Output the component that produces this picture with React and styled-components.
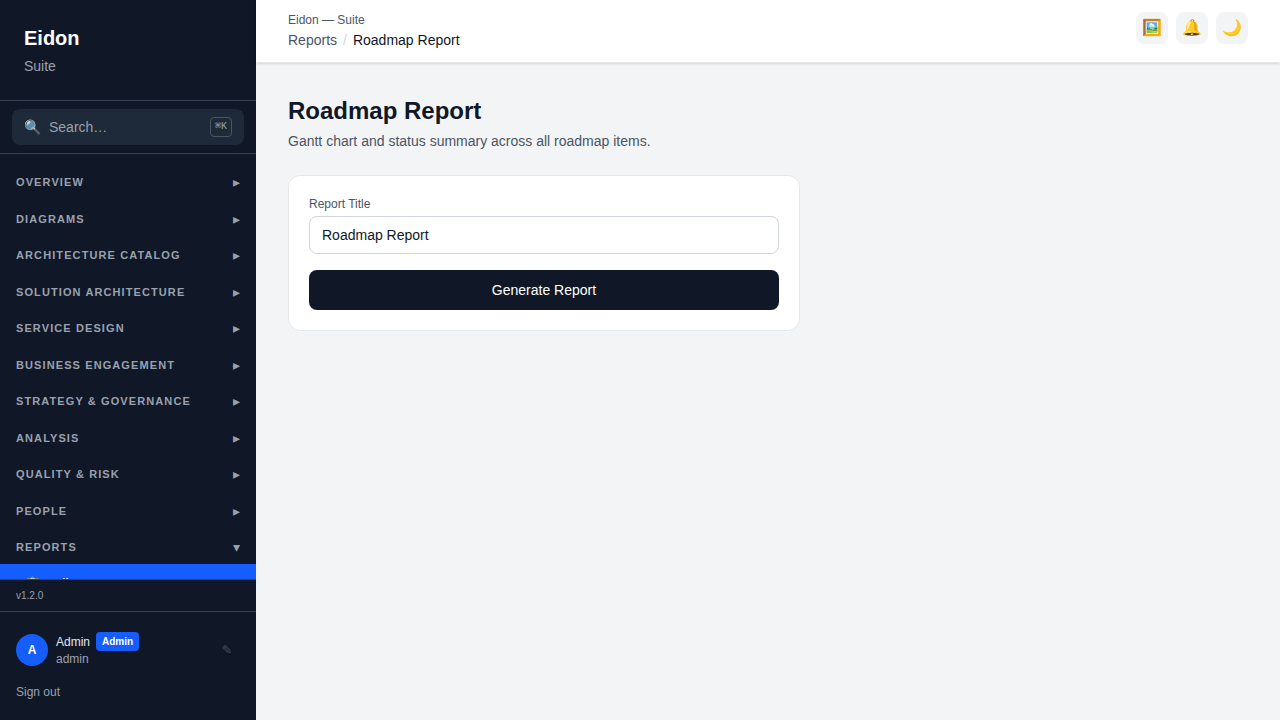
import React, { useState } from 'react';
import styled, { createGlobalStyle } from 'styled-components';

const sections = [
  { name: 'Overview' },
  { name: 'Diagrams' },
  { name: 'Architecture Catalog' },
  { name: 'Solution Architecture' },
  { name: 'Service Design' },
  { name: 'Business Engagement' },
  { name: 'Strategy & Governance' },
  { name: 'Analysis' },
  { name: 'Quality & Risk' },
  { name: 'People' },
  { name: 'Reports', links: [{ icon: '📋', label: 'All Reports' }] },
];

const actions = [
  { icon: '🖼️', label: 'Gallery' },
  { icon: '🔔', label: 'Notifications' },
  { icon: '🌙', label: 'Dark mode' },
];

function Sidebar() {
  const [open, setOpen] = useState('Reports');

  return (
    <Aside>
      <Brand>
        <BrandName>Eidon</BrandName>
        <BrandSub>Suite</BrandSub>
      </Brand>
      <SearchArea>
        <SearchButton type="button">
          <span>🔍</span>
          <SearchText>Search…</SearchText>
          <Kbd>⌘K</Kbd>
        </SearchButton>
      </SearchArea>
      <Nav>
        {sections.map((section) => (
          <div key={section.name}>
            <SectionButton
              type="button"
              aria-expanded={open === section.name}
              onClick={() => setOpen(open === section.name ? '' : section.name)}
            >
              <span>{section.name}</span>
              <Arrow>{open === section.name ? '▾' : '▸'}</Arrow>
            </SectionButton>
            {open === section.name && section.links?.map((link) => (
              <NavItem key={link.label} href="#reports">
                <span>{link.icon}</span>
                <span>{link.label}</span>
              </NavItem>
            ))}
          </div>
        ))}
      </Nav>
      <Version>v1.2.0</Version>
      <UserArea>
        <UserRow>
          <Avatar>A</Avatar>
          <UserInfo>
            <UserLine>
              <UserName>Admin</UserName>
              <Badge>Admin</Badge>
            </UserLine>
            <UserLogin>admin</UserLogin>
          </UserInfo>
          <EditButton type="button" aria-label="Edit profile">✎</EditButton>
        </UserRow>
        <SignOut type="button">Sign out</SignOut>
      </UserArea>
    </Aside>
  );
}

function App() {
  const [title, setTitle] = useState('Roadmap Report');

  return (
    <Layout>
      <GlobalStyle />
      <Sidebar />
      <Content>
        <Header>
          <div>
            <SuiteName>Eidon — Suite</SuiteName>
            <Breadcrumb aria-label="Breadcrumb">
              <CrumbLink href="#reports">Reports</CrumbLink>
              <Slash>/</Slash>
              <Current>Roadmap Report</Current>
            </Breadcrumb>
          </div>
          <Actions>
            {actions.map((action) => (
              <IconButton key={action.label} type="button" aria-label={action.label}>
                {action.icon}
              </IconButton>
            ))}
          </Actions>
        </Header>
        <Main>
          <Title>Roadmap Report</Title>
          <Subtitle>Gantt chart and status summary across all roadmap items.</Subtitle>
          <Card onSubmit={(e) => e.preventDefault()}>
            <Label htmlFor="title">Report Title</Label>
            <Input id="title" type="text" value={title} onChange={(e) => setTitle(e.target.value)} />
            <Submit type="submit">Generate Report</Submit>
          </Card>
        </Main>
      </Content>
    </Layout>
  );
}

export default App;

const GlobalStyle = createGlobalStyle`
  *, *::before, *::after { box-sizing: border-box; }
  body {
    margin: 0;
    font-family: "Liberation Sans", Arial, sans-serif;
    font-size: 14px;
    line-height: 20px;
    color: #101828;
    background: #f3f4f6;
  }
  h1, p { margin: 0; }
  a { color: inherit; text-decoration: none; }
  button, input { font: inherit; color: inherit; }
  button { border: 0; padding: 0; background: none; cursor: pointer; }
`;

const Layout = styled.div`
  display: flex;
  height: 100vh;
  overflow: hidden;
`;

// sidebar
const Aside = styled.aside`
  display: flex;
  flex-direction: column;
  flex-shrink: 0;
  width: 256px;
  background: #101828;
  color: #99a1af;
`;

const Brand = styled.div`
  padding: 24px;
  border-bottom: 1px solid #364153;
`;

const BrandName = styled.div`
  font-size: 20px;
  line-height: 28px;
  font-weight: 700;
  color: #fff;
`;

const BrandSub = styled.p`
  margin-top: 4px;
`;

const SearchArea = styled.div`
  padding: 8px 12px;
  border-bottom: 1px solid #364153;
`;

const SearchButton = styled.button`
  display: flex;
  align-items: center;
  gap: 8px;
  width: 100%;
  padding: 8px 12px;
  border-radius: 8px;
  background: #1e2939;
  text-align: left;
`;

const SearchText = styled.span`
  flex: 1;
`;

const Kbd = styled.kbd`
  padding: 1px 4px;
  border: 1px solid #4a5565;
  border-radius: 4px;
  font-family: "Liberation Mono", monospace;
  font-size: 10px;
  line-height: 16px;
`;

const Nav = styled.nav`
  flex: 1;
  min-height: 0;
  padding: 8px 0;
  overflow-y: auto;
  scrollbar-width: none;
`;

const SectionButton = styled.button`
  display: flex;
  align-items: center;
  justify-content: space-between;
  width: 100%;
  padding: 12px 16px 8px;
  font-size: 11px;
  line-height: 1.5;
  font-weight: 700;
  letter-spacing: 0.1em;
  text-transform: uppercase;
`;

const Arrow = styled.span`
  font-weight: 400;
  font-size: 14px;
  line-height: 16px;
  letter-spacing: 0;
`;

const NavItem = styled.a`
  display: flex;
  gap: 12px;
  padding: 10px 24px;
  background: #155dfc;
  color: #fff;
`;

const Version = styled.div`
  padding: 8px 16px;
  border-top: 1px solid #364153;
  font-size: 10px;
  line-height: 15px;
`;

const UserArea = styled.div`
  padding: 16px;
  border-top: 1px solid #364153;
  font-size: 12px;
  line-height: 16px;
`;

const UserRow = styled.div`
  display: flex;
  align-items: center;
  gap: 8px;
  height: 44px;
  margin-bottom: 8px;
`;

const Avatar = styled.div`
  display: flex;
  align-items: center;
  justify-content: center;
  width: 32px;
  height: 32px;
  border-radius: 50%;
  background: #155dfc;
  color: #fff;
  font-weight: 700;
`;

const UserInfo = styled.div`
  flex: 1;
  padding-bottom: 1px;
`;

const UserLine = styled.div`
  display: flex;
  align-items: center;
  gap: 6px;
`;

const UserName = styled.span`
  color: #e5e7eb;
`;

const Badge = styled.span`
  padding: 2px 6px;
  border-radius: 4px;
  background: #155dfc;
  color: #fff;
  font-size: 10px;
  line-height: 15px;
  font-weight: 700;
`;

const UserLogin = styled.div`
  color: #99a1af;
`;

const EditButton = styled.button`
  padding: 4px 8px;
  color: #4a5565;
`;

const SignOut = styled.button`
  display: block;
  width: 100%;
  padding: 4px 0;
  text-align: left;
`;

// page
const Content = styled.div`
  display: flex;
  flex-direction: column;
  flex: 1;
  min-width: 0;
`;

const Header = styled.header`
  display: flex;
  align-items: flex-start;
  justify-content: space-between;
  padding: 12px 32px;
  border-bottom: 1px solid #e5e7eb;
  background: #fff;
  box-shadow: 0 1px 3px rgba(0, 0, 0, 0.1), 0 1px 2px -1px rgba(0, 0, 0, 0.1);
`;

const SuiteName = styled.p`
  font-size: 12px;
  line-height: 16px;
  color: #4a5565;
`;

const Breadcrumb = styled.nav`
  display: flex;
  gap: 6px;
  margin-top: 2px;
`;

const CrumbLink = styled.a`
  color: #4a5565;
`;

const Slash = styled.span`
  color: #d1d5dc;
`;

const Current = styled.span`
  color: #101828;
`;

const Actions = styled.div`
  display: flex;
  gap: 8px;
`;

const IconButton = styled.button`
  width: 32px;
  height: 32px;
  border-radius: 8px;
  background: #f3f4f6;
  font-size: 16px;
  line-height: 24px;
`;

const Main = styled.main`
  flex: 1;
  padding: 32px;
  overflow-y: auto;
`;

const Title = styled.h1`
  font-size: 24px;
  line-height: 32px;
`;

const Subtitle = styled.p`
  margin: 4px 0 24px;
  color: #4a5565;
`;

const Card = styled.form`
  display: flex;
  flex-direction: column;
  max-width: 512px;
  padding: 20px;
  border: 1px solid #e5e7eb;
  border-radius: 12px;
  background: #fff;
`;

const Label = styled.label`
  margin-bottom: 4px;
  font-size: 12px;
  line-height: 16px;
  color: #4a5565;
`;

const Input = styled.input`
  height: 38px;
  margin-bottom: 16px;
  padding: 8px 12px;
  border: 1px solid #d1d5dc;
  border-radius: 8px;
  background: #fff;
`;

const Submit = styled.button`
  padding: 10px 16px;
  border-radius: 8px;
  background: #101828;
  color: #fff;
`;
